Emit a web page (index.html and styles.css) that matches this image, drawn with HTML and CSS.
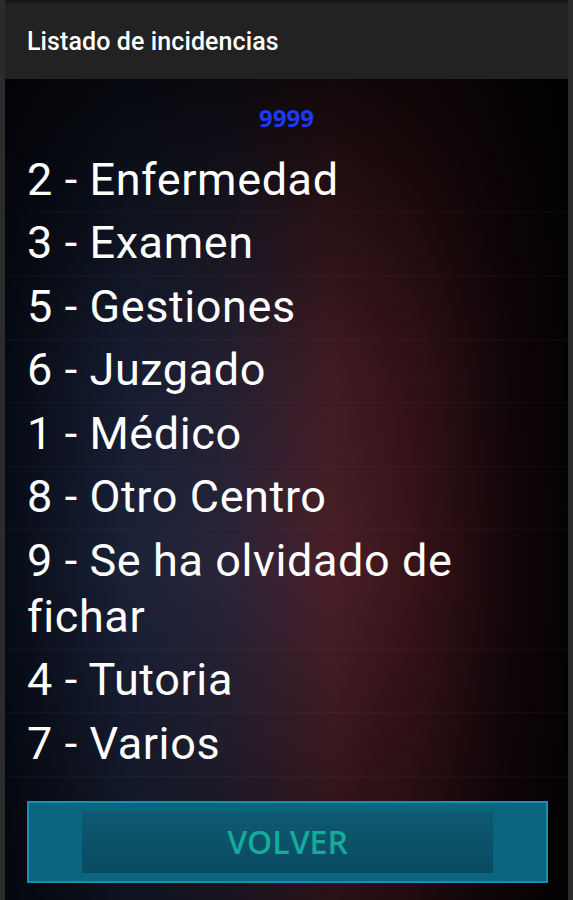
FILE: index.html
```html
<!DOCTYPE html>
<html lang="es">

<head>
  <meta charset="UTF-8">
  <meta name="viewport" content="width=device-width, initial-scale=1.0">
  <title>Listado de incidencias</title>
  <link rel="stylesheet" href="styles.css">
</head>

<body>
  <div class="screen">
    <!-- Barra de título -->
    <header class="title-bar">Listado de incidencias</header>

    <main class="content">
      <div class="user-code">9999</div>

      <!-- Lista de incidencias -->
      <ul class="incidents">
        <li>2 - Enfermedad</li>
        <li>3 - Examen</li>
        <li>5 - Gestiones</li>
        <li>6 - Juzgado</li>
        <li>1 - Médico</li>
        <li>8 - Otro Centro</li>
        <li>9 - Se ha olvidado de fichar</li>
        <li>4 - Tutoria</li>
        <li>7 - Varios</li>
      </ul>

      <button class="back-btn"><span>VOLVER</span></button>
    </main>
  </div>
</body>

</html>
```

FILE: styles.css
```css
html,
body {
  margin: 0;
  height: 100%;
}

body {
  background-color: #2b2b2b;
  font-family: Roboto, "Noto Sans", sans-serif;
  overflow: hidden;
}

.screen {
  margin: 0 5px;
  height: 900px;
  border-top: 3px solid #181818;
  display: flex;
  flex-direction: column;
}

.title-bar {
  height: 76px;
  flex-shrink: 0;
  display: flex;
  align-items: center;
  padding-left: 22px;
  background-color: #222222;
  color: #fff;
  font-size: 25px;
  font-weight: 500;
  letter-spacing: 0.1px;
}

.content {
  flex: 1;
  padding-top: 24px;
  background:
    linear-gradient(to bottom, rgba(0, 0, 0, 0.75) 0%, rgba(0, 0, 0, 0.15) 35%, rgba(0, 0, 0, 0) 60%, rgba(0, 0, 0, 0.45) 100%),
    linear-gradient(to right, #070b16 0%, #1a2239 22%, #2a2438 40%, #4a1f27 58%, #3a1419 72%, #12060a 90%, #040203 100%);
}

.user-code {
  text-align: center;
  font-family: "Open Sans", sans-serif;
  font-size: 24px;
  font-weight: bold;
  line-height: 30px;
  color: #1a3cf2;
}

.incidents {
  list-style-type: none;
  margin: 15px 0 0;
  padding: 0;
}

.incidents li {
  padding: 3.75px 20px 3.75px 22px;
  font-size: 45px;
  line-height: 56px;
  letter-spacing: 0.6px;
  color: #fff;
  border-bottom: 1px solid rgba(255, 255, 255, 0.03);
  margin-bottom: -1px;
}

.back-btn {
  display: block;
  box-sizing: border-box;
  width: 521px;
  height: 82px;
  margin: 25px 0 0 22px;
  padding: 8px 53px 8px 53px;
  background-color: #0c6580;
  border: 2px solid #1890b2;
  cursor: pointer;
}

.back-btn span {
  display: flex;
  align-items: center;
  justify-content: center;
  height: 100%;
  background: linear-gradient(to bottom, #0d5a72, #0a4a60);
  color: #17a99a;
  font-family: "Open Sans", sans-serif;
  font-size: 32px;
  font-weight: 600;
}
```
